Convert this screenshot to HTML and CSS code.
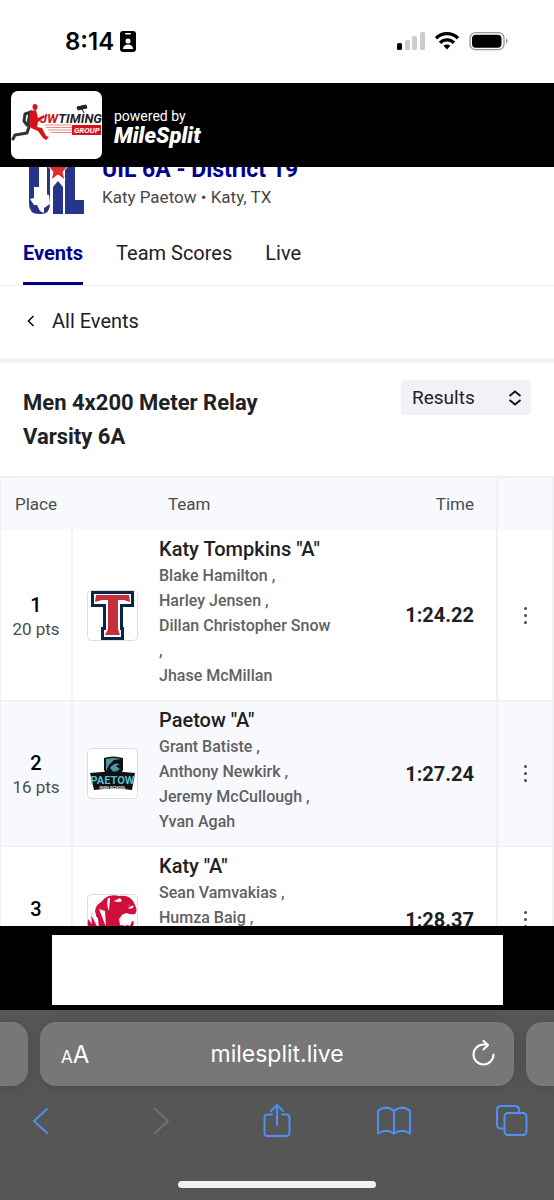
FILE: index.html
```
<!DOCTYPE html>
<html lang="en">
<head>
	<meta charset="UTF-8">
	<meta name="viewport" content="width=device-width, initial-scale=1">
	<title>UIL 6A - District 19</title>
	<link rel="stylesheet" href="styles.css">
</head>
<body>
	<div class="status">
		<span class="clock">8:14</span>
		<svg class="badge" width="16" height="21" viewBox="0 0 16 21">
			<rect width="16" height="21" rx="3" fill="#000"/>
			<rect x="5" y="2" width="6" height="1.5" rx=".7" fill="#fff"/>
			<circle cx="8" cy="10" r="2.5" fill="#fff"/>
			<path d="M3 18c0-3 2-4.500 5-4.500s5 1.500 5 4.500z" fill="#fff"/>
		</svg>
		<svg class="signals" width="112" height="20" viewBox="0 0 112 20">
			<rect x="0" y="11" width="5" height="7" rx="1.500"/>
			<g fill="#ccc">
				<rect x="8" y="8" width="5" height="10" rx="1.500"/>
				<rect x="15" y="4" width="5" height="14" rx="1.500"/>
				<rect x="23" y="0" width="5" height="18" rx="1.500"/>
			</g>
			<g fill="none" stroke="#000" stroke-width="3.300">
				<path d="M39 6.200c6.300-6 15.700-6 22 0"/>
				<path d="M43 10.700c4-3.900 10-3.900 14 0"/>
			</g>
			<path d="M46.500 13.800c2-1.800 5-1.800 7 0L50 17.500z"/>
			<rect x="73" y=".7" width="34" height="17" rx="5.500" fill="none" stroke="#999" stroke-width="1.300"/>
			<rect x="75" y="2.700" width="29.500" height="13" rx="4"/>
			<path d="M109 6.500c2 .8 2 4.400 0 5.200z" fill="#999"/>
		</svg>
	</div>

	<header class="topbar">
		<div class="host">
			<svg width="91" height="68" viewBox="0 0 91 68">
				<g fill="none" stroke="#333" stroke-linecap="round" stroke-linejoin="round">
					<path d="M20 21l-6 2-1 7 3 4" stroke-width="3"/>
					<path d="M20 22l-2 10" stroke-width="5"/>
					<path d="M19 33l-3 9-12 2-2 4" stroke-width="3"/>
				</g>
				<ellipse cx="24" cy="16" rx="2.500" ry="3" fill="#d8121b"/>
				<path d="M19 20l6-1 2 8 6-3 1 2-7 5-1 5 5 1 4 8 3 1-3 3-3-2-5-7-7-3-2-5z" fill="#d8121b"/>
				<path d="M34 34h27M35 36.500h26M37 39h24M40 41.500h21" stroke="#ef8a8e" stroke-width="1"/>
				<path d="M66 16l9-2 1 3-9 2zM71 18l2 4" fill="#222" stroke="#222"/>
				<text x="29" y="32" class="host-name"><tspan fill="#d8121b">JW</tspan>TIMING</text>
				<rect x="61" y="34" width="29" height="10" fill="#d8121b"/>
				<text x="63" y="42" class="host-group">GROUP</text>
			</svg>
		</div>
		<div class="powered">
			<span>powered by</span>
			<b>MileSplit</b>
		</div>
	</header>

	<main>
		<section class="meet">
			<svg width="56" height="66" viewBox="0 0 56 66">
				<path d="M1 17h10v35q0 5 4 5t4-5V17h3v38q0 10-9 10h-2Q1 65 1 55z" fill="#27348b"/>
				<path d="M25 38l5-6 5 6v27H25zM37 17h10v34h9v14H37z" fill="#27348b"/>
				<path d="M30 6l4 11h6l-5 6 2 8-7-5-7 5 2-8-5-6h6z" fill="#e02a34" stroke="#fff"/>
				<path d="M6 38h6v6l9 2 1 9-6 4 0 5-4-2-3-6-3 0-4-6 4-1z" fill="#fff"/>
			</svg>
			<div class="meet-info">
				<h1>UIL 6A - District 19</h1>
				<p>Katy Paetow • Katy, TX</p>
			</div>
		</section>

		<nav class="tabs">
			<a href="#events" class="active">Events</a>
			<a href="#scores">Team Scores</a>
			<a href="#live">Live</a>
		</nav>

		<a href="#all" class="back">
			<svg width="8" height="12" viewBox="0 0 8 12"><path d="M6.500 1L1.500 6l5 5" fill="none" stroke="#111" stroke-width="1.600"/></svg>
			All Events
		</a>

		<section class="event">
			<h2>Men 4x200 Meter Relay Varsity 6A</h2>
			<div class="picker">
				<select aria-label="View">
					<option>Results</option>
				</select>
				<svg width="14" height="16" viewBox="0 0 14 16"><path d="M1.500 6L7 1.500 12.500 6M1.500 10L7 14.500l5.500-4.500" fill="none" stroke="#111" stroke-width="1.800"/></svg>
			</div>
		</section>

		<table>
			<colgroup>
				<col class="c-place">
				<col class="c-logo">
				<col>
				<col class="c-time">
				<col class="c-more">
			</colgroup>
			<thead>
				<tr>
					<th class="place">Place</th>
					<th></th>
					<th class="team">Team</th>
					<th class="time">Time</th>
					<th class="more"></th>
				</tr>
			</thead>
			<tbody>
				<tr>
					<td class="place"><b>1</b><span>20 pts</span></td>
					<td class="logo">
						<svg width="51" height="51" viewBox="0 0 51 51">
							<rect x=".5" y=".5" width="50" height="50" rx="4" fill="#fff" stroke="#ddd"/>
							<path d="M4 1h43v16H36v20h1v13H14V37h2V17H4z" fill="#0b2545"/>
							<path d="M7 4h37v10H33v26h1v7H17v-7h2V14H7z" fill="#fff"/>
							<path d="M9 5h33l1 7-6-2h-6v29l2 6H18l3-6V10h-6l-7 2z" fill="#c6303a"/>
						</svg>
					</td>
					<td class="team">
						<h3>Katy Tompkins "A"</h3>
						<p>Blake Hamilton ,</p>
						<p>Harley Jensen ,</p>
						<p>Dillan Christopher Snow ,</p>
						<p>Jhase McMillan</p>
					</td>
					<td class="time">1:24.22</td>
					<td class="more"><button aria-label="More"><i></i><i></i><i></i></button></td>
				</tr>
				<tr>
					<td class="place"><b>2</b><span>16 pts</span></td>
					<td class="logo">
						<svg width="51" height="51" viewBox="0 0 51 51">
							<rect x=".5" y=".5" width="50" height="50" rx="4" fill="#fff" stroke="#ddd"/>
							<path d="M17 10q9-3 19 0v12q-2 5-9 8-8-3-10-8z" fill="#111"/>
							<path d="M19 11q8-2 15 0l-7 1-5 5-3 6zM23 20q4-6 10-4l-4 2 4 3-6 4z" fill="#4a94a5"/>
							<path d="M3 25q23-3 45 0l-3 17q-19-3-38 0z" fill="#111"/>
							<text x="25.500" y="36" class="paetow">PAETOW</text>
							<text x="25.500" y="41" class="paetow-sub">HIGH SCHOOL</text>
						</svg>
					</td>
					<td class="team">
						<h3>Paetow "A"</h3>
						<p>Grant Batiste ,</p>
						<p>Anthony Newkirk ,</p>
						<p>Jeremy McCullough ,</p>
						<p>Yvan Agah</p>
					</td>
					<td class="time">1:27.24</td>
					<td class="more"><button aria-label="More"><i></i><i></i><i></i></button></td>
				</tr>
				<tr>
					<td class="place"><b>3</b><span>&nbsp;</span></td>
					<td class="logo">
						<svg width="51" height="51" viewBox="0 0 51 51">
							<rect x=".5" y=".5" width="50" height="50" rx="4" fill="#fff" stroke="#ddd"/>
							<path d="M8 17q1-6 5-8l5-5q5-4 14-2 12-2 16 9 3 6 0 9-4 1-9-1l-5 3 1 7 8 3 2-5 2 1-2 8-5 7H3q-3-8-2-18l4 5-1-11 6 6z" fill="#d0103a"/>
							<path d="M21 4q-2 7 1 13l1-13zM27 7l6-3 2 3q-4 2-8 0zM39 10q3 2 8 2-2 4-6 2l4-2zM3 19l9 17-1-12zM12 15l7 18-1-16zM36 20l-4 5 1 6 7 1-4-6 2-5z" fill="#fff"/>
						</svg>
					</td>
					<td class="team">
						<h3>Katy "A"</h3>
						<p>Sean Vamvakias ,</p>
						<p>Humza Baig ,</p>
						<p>&nbsp;</p>
						<p>&nbsp;</p>
					</td>
					<td class="time">1:28.37</td>
					<td class="more"><button aria-label="More"><i></i><i></i><i></i></button></td>
				</tr>
			</tbody>
		</table>
	</main>

	<div class="ad"><div class="ad-slot"></div></div>

	<footer class="browser">
		<div class="address">
			<div class="side left"></div>
			<div class="bar">
				<button class="aa" aria-label="Page settings"><small>A</small>A</button>
				<input type="text" value="milesplit.live" aria-label="Address">
				<button aria-label="Reload">
					<svg width="24" height="28" viewBox="0 0 24 28" fill="none" stroke="#fff" stroke-width="2" stroke-linecap="round" stroke-linejoin="round"><path d="M22.500 14.500A10 10 0 1 1 12.500 4.500h4M12.500 1l4.500 4-4.500 4.500"/></svg>
				</button>
			</div>
			<div class="side right"></div>
		</div>
		<div class="tools">
			<button aria-label="Back"><svg width="32" height="36" viewBox="0 0 32 36"><path d="M21 6L8 18 21 30"/></svg></button>
			<button aria-label="Forward" disabled><svg width="32" height="36" viewBox="0 0 32 36"><path d="M12 6l13 12-13 12"/></svg></button>
			<button aria-label="Share"><svg width="32" height="36" viewBox="0 0 32 36"><path d="M12 11.500H7.500q-3 0-3 3V30q0 3 3 3h19q3 0 3-3V14.500q0-3-3-3H22M17 22V2M11 8l6-6 6 6"/></svg></button>
			<button aria-label="Bookmarks"><svg width="34" height="36" viewBox="0 0 34 36"><path d="M17 8C12 3.500 5 4 1 8v22.500c5-3.500 11-3.500 16 0 5-3.500 11-3.500 16 0V8c-4-4-11-4.500-16 0zM17 8v22.500"/></svg></button>
			<button aria-label="Tabs"><svg width="32" height="36" viewBox="0 0 32 36"><rect x="8.500" y="10" width="22" height="22" rx="3.500"/><path d="M8.500 25.500H5q-4 0-4-4V7q0-4 4-4h14q4 0 4 4v3"/></svg></button>
		</div>
		<div class="home"></div>
	</footer>
</body>
</html>
```
FILE: styles.css
```
* {
	box-sizing: border-box;
}
body {
	margin: 0;
	height: 100vh;
	display: flex;
	flex-direction: column;
	font-family: Roboto, "Liberation Sans", sans-serif;
	font-size: 20px;
	color: #202124;
	background: #fff;
	overflow: hidden;
}
h1, h2, h3, p {
	margin: 0;
}
a {
	color: inherit;
	text-decoration: none;
}
button {
	padding: 0;
	border: 0;
	background: none;
	color: inherit;
}
svg {
	display: block;
	flex: none;
}

/* phone status bar */
.status {
	flex: none;
	height: 83px;
	padding: 0 45px 0 65px;
	display: flex;
	align-items: center;
	gap: 6px;
}
.clock {
	font: 600 24px/28px Inter, sans-serif;
	color: #000;
}
.signals {
	margin-left: auto;
}

/* sponsor bar */
.topbar {
	flex: none;
	height: 84px;
	padding: 0 11px;
	display: flex;
	align-items: center;
	gap: 12px;
	background: #000;
	color: #fff;
}
.host {
	border-radius: 7px;
	background: #fff;
	overflow: hidden;
}
.host-name {
	font: italic 700 13px Roboto, sans-serif;
	fill: #222;
}
.host-group {
	font: italic 700 8px Roboto, sans-serif;
	fill: #fff;
}
.powered {
	padding-top: 4px;
	display: flex;
	flex-direction: column;
	font-size: 14px;
	line-height: 18px;
}
.powered b {
	font: italic 900 22px/22px Roboto, sans-serif;
}

main {
	flex: 1;
	min-height: 0;
	overflow: hidden;
}
.meet {
	height: 48px;
	padding: 0 28px;
	display: flex;
	align-items: flex-end;
	gap: 18px;
	overflow: hidden;
}
.meet h1 {
	font-size: 23px;
	line-height: 28px;
	color: #00008f;
}
.meet p {
	margin-bottom: 5px;
	font-size: 17px;
	line-height: 26px;
	color: #46484d;
}

.tabs {
	height: 71px;
	padding: 0 23px;
	display: flex;
	gap: 33px;
	border-bottom: 1px solid #eee;
}
.tabs a {
	padding-top: 22px;
	line-height: 32px;
}
.tabs .active {
	font-weight: 700;
	color: #00008f;
	border-bottom: 3px solid #00008f;
}
.back {
	height: 77px;
	padding: 0 27px 2px;
	display: flex;
	align-items: center;
	gap: 17px;
	border-bottom: 5px solid #f3f3f5;
}

.event {
	min-height: 113px;
	padding: 17px 23px;
	display: flex;
	justify-content: space-between;
	align-items: flex-start;
}
.event h2 {
	max-width: 280px;
	padding-top: 6px;
	font-size: 22px;
	line-height: 34px;
}
.picker {
	position: relative;
}
.picker select {
	appearance: none;
	width: 130px;
	height: 35px;
	padding: 0 11px;
	border: 0;
	border-radius: 4px;
	background: #f1f1f7;
	font: 19px Roboto, sans-serif;
	color: #202124;
}
.picker svg {
	position: absolute;
	right: 9px;
	top: 10px;
	pointer-events: none;
}

/* results */
table {
	width: 100%;
	table-layout: fixed;
	border-collapse: separate;
	border-spacing: 0;
	border: 1px solid #f0f0f4;
	border-right-width: 2px;
	border-top-width: 2px;
}
.c-place {
	width: 72px;
}
.c-logo {
	width: 78px;
}
.c-time {
	width: 160px;
}
.c-more {
	width: 56px;
}
th {
	height: 52px;
	padding: 0 16px 0 14px;
	font-size: 17px;
	font-weight: 400;
	text-align: left;
	color: #4a4c50;
	background: #f8f9fd;
}
th.team {
	padding-left: 17px;
}
td {
	padding: 0;
	border-bottom: 1px solid #f0f0f4;
}
tbody tr:nth-child(even) {
	background: #f8f9fd;
}
td.place {
	padding-top: 3px;
	border-right: 2px solid #f3f3f7;
	text-align: center;
	font-size: 17px;
	line-height: 24px;
	color: #4a4c50;
}
.place b {
	display: block;
	font-size: 20px;
	font-weight: 500;
	color: #000;
}
.logo svg {
	margin-left: 14px;
}
td.team {
	padding: 5px 4px 12px 8px;
}
.team h3 {
	font-size: 20px;
	font-weight: 500;
	line-height: 28px;
}
.team p {
	font-size: 16px;
	font-weight: 500;
	line-height: 25px;
	color: #606164;
}
.time {
	text-align: right;
	padding-right: 22px;
}
td.time {
	font-weight: 700;
}
.more {
	border-left: 2px solid #f0f0f4;
}
.more button {
	display: flex;
	flex-direction: column;
	gap: 4px;
	margin: 0 auto;
}
.more i {
	width: 3px;
	height: 3px;
	border-radius: 50%;
	background: #4a4c50;
}
.paetow {
	font: 700 11px Roboto, sans-serif;
	fill: #55bdd3;
	text-anchor: middle;
}
.paetow-sub {
	font: 700 4px Roboto, sans-serif;
	fill: #eee;
	text-anchor: middle;
}

.ad {
	flex: none;
	height: 84px;
	padding: 9px 51px 5px 52px;
	display: flex;
	background: #000;
}
.ad-slot {
	flex: 1;
	background: #fff;
}

/* browser chrome */
.browser {
	flex: none;
	height: 190px;
	padding: 12px 0;
	display: flex;
	flex-direction: column;
	background: #565656;
	color: #fff;
	overflow: hidden;
}
.address {
	display: flex;
	gap: 12px;
	height: 64px;
}
.side, .bar {
	background: #777;
	box-shadow: 0 2px 12px rgba(0, 0, 0, .12);
}
.side {
	width: 28px;
}
.left {
	border-radius: 0 16px 16px 0;
}
.right {
	border-radius: 16px 0 0 16px;
}
.bar {
	flex: 1;
	min-width: 0;
	padding: 0 19px 0 21px;
	display: flex;
	align-items: center;
	border-radius: 16px;
}
.bar input {
	flex: 1;
	min-width: 0;
	padding: 0 6px 0 0;
	border: 0;
	outline: none;
	background: none;
	text-align: center;
	font: 23px Inter, sans-serif;
	color: #fff;
}
.aa {
	font: 24px Inter, sans-serif;
}
.aa small {
	font-size: 17px;
}
.tools {
	display: flex;
	justify-content: space-between;
	padding: 17px 26px 0;
}
.tools svg {
	fill: none;
	stroke: #4f90f3;
	stroke-width: 2;
	stroke-linecap: round;
	stroke-linejoin: round;
}
.tools button:disabled svg {
	stroke: #707070;
}
.home {
	width: 198px;
	height: 7px;
	margin: auto auto 0;
	border-radius: 4px;
	background: #f2f2f2;
}
```
